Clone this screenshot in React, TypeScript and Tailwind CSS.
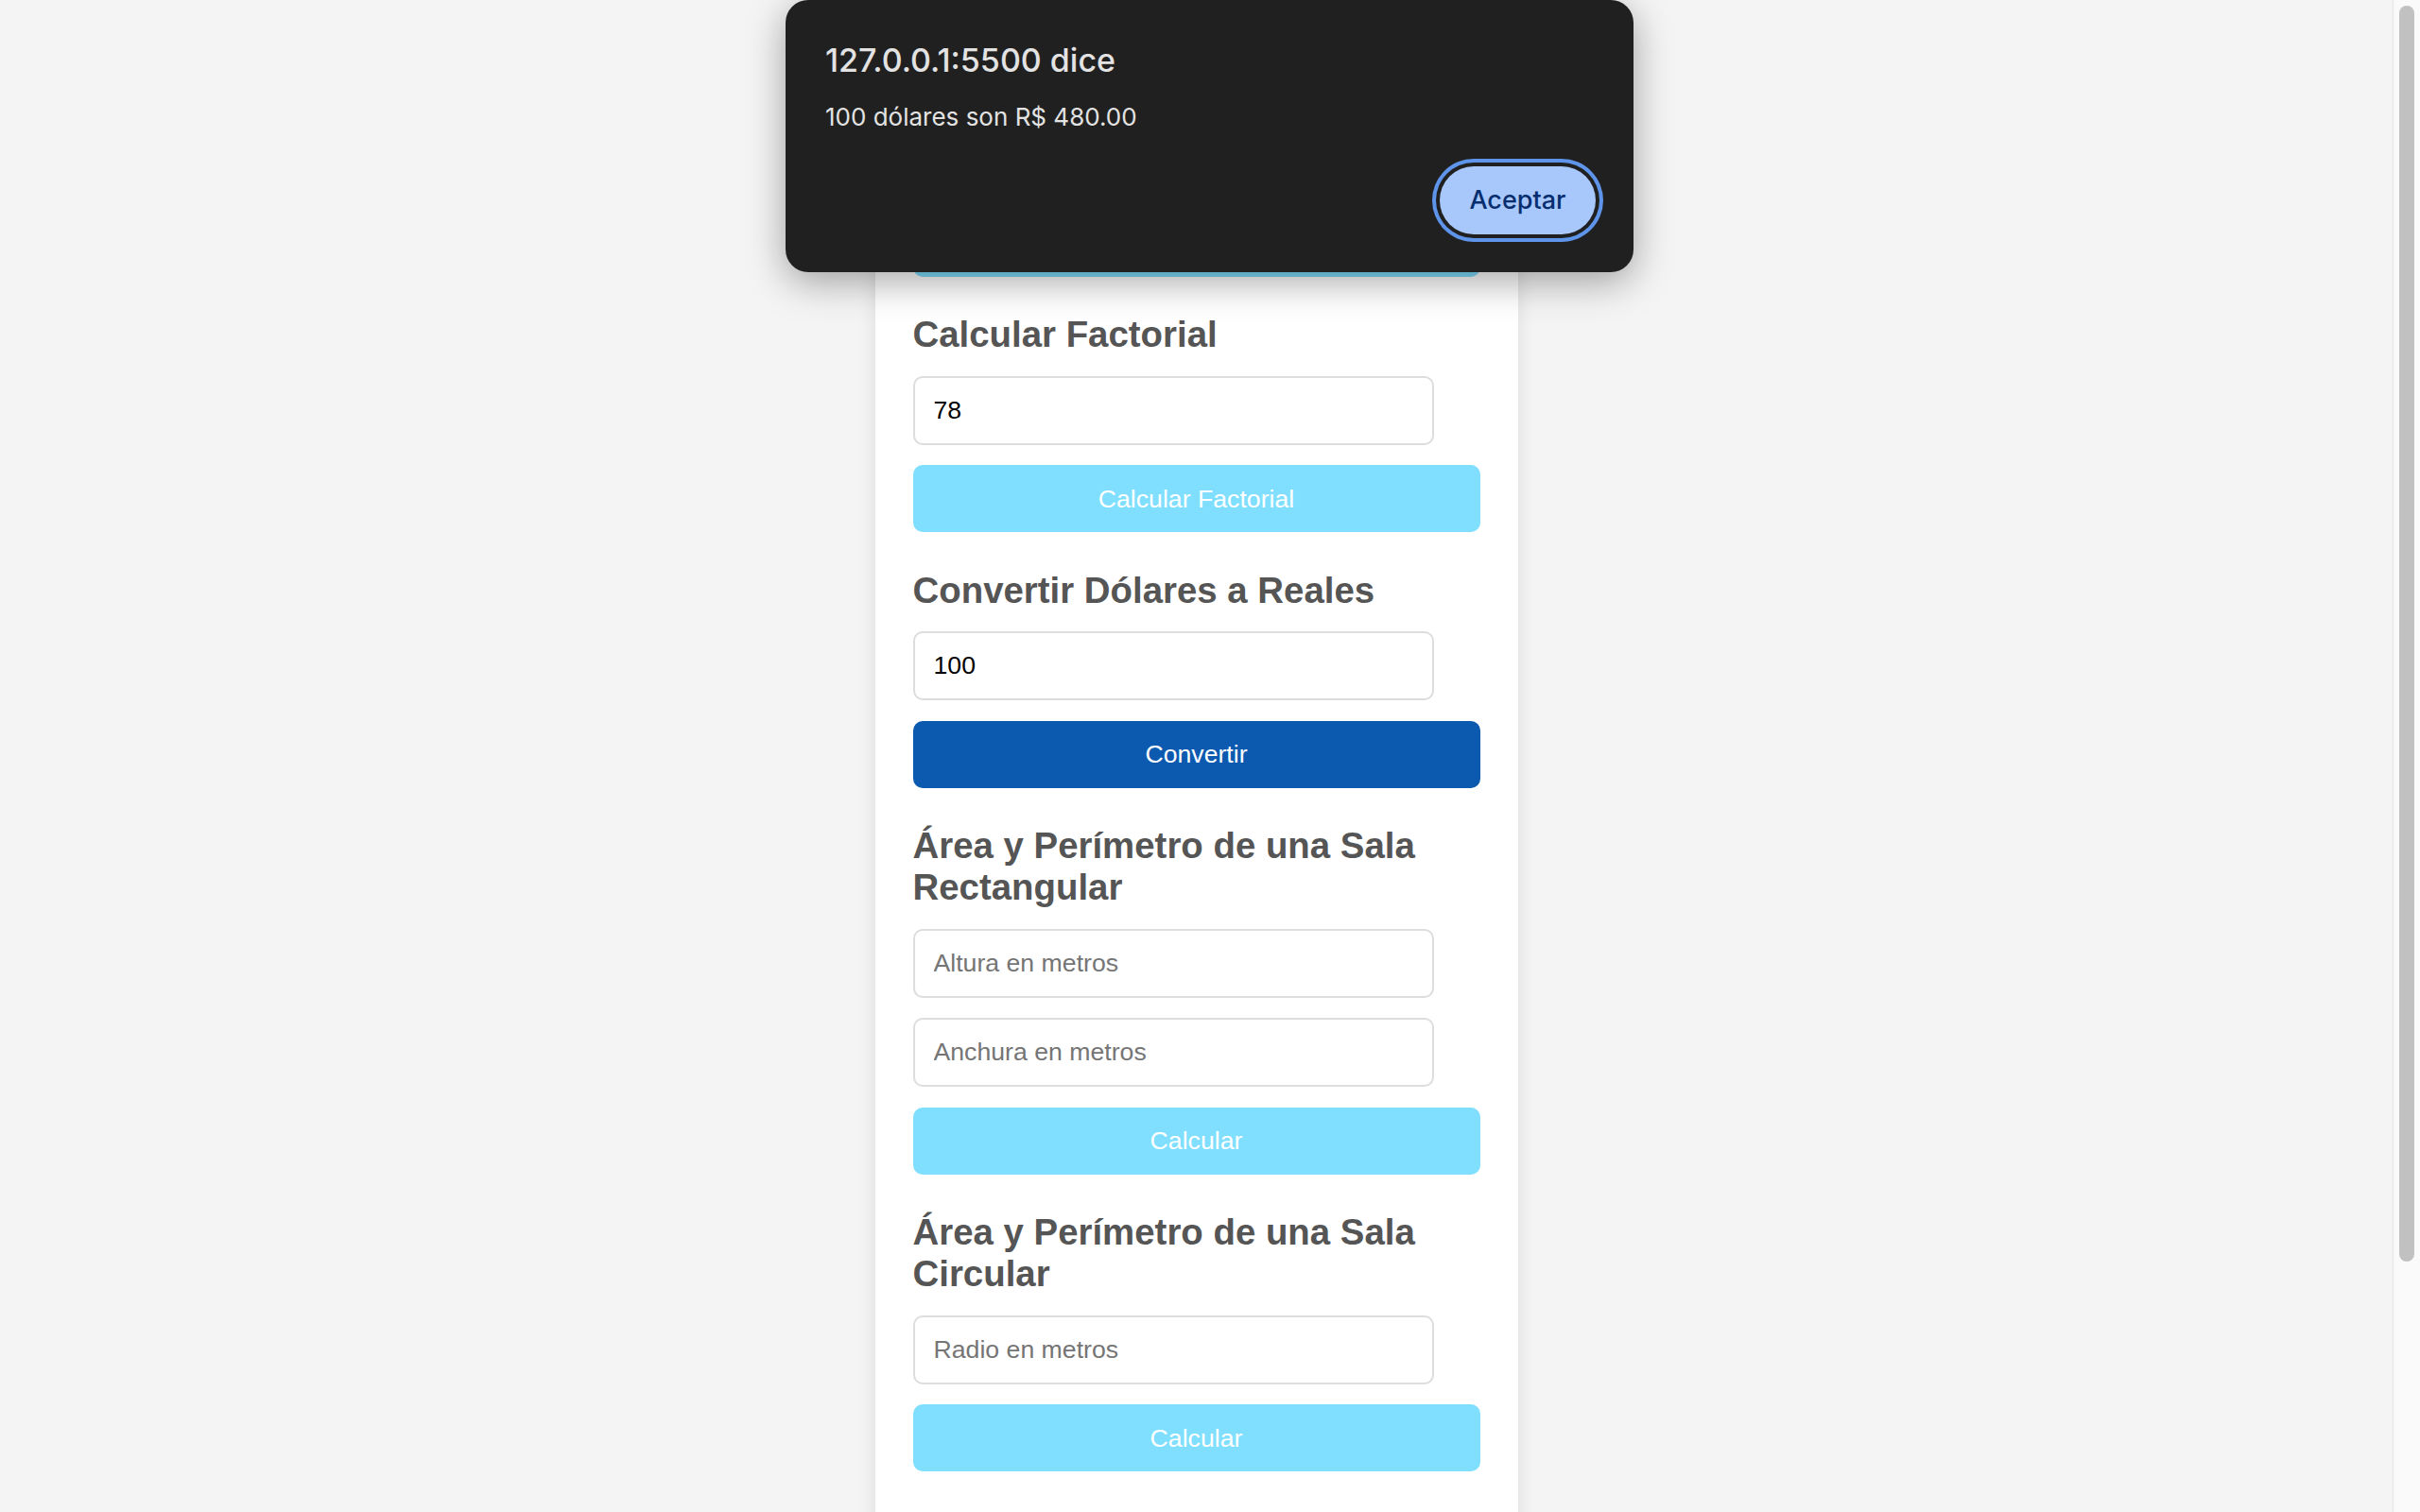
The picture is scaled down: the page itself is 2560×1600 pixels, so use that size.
import React from 'react';

type Section = {
  title: string;
  fields: { placeholder?: string; value?: string }[];
  button: string;
  active?: boolean;
};

// first block sits under the alert, only the bottom edge of its button shows
const sections: Section[] = [
  { title: '', fields: [{}], button: '' },
  { title: 'Calcular Factorial', fields: [{ value: '78' }], button: 'Calcular Factorial' },
  { title: 'Convertir Dólares a Reales', fields: [{ value: '100' }], button: 'Convertir', active: true },
  {
    title: 'Área y Perímetro de una Sala Rectangular',
    fields: [{ placeholder: 'Altura en metros' }, { placeholder: 'Anchura en metros' }],
    button: 'Calcular',
  },
  {
    title: 'Área y Perímetro de una Sala Circular',
    fields: [{ placeholder: 'Radio en metros' }],
    button: 'Calcular',
  },
];

function AlertDialog() {
  return (
    <div className="absolute left-[831px] top-0 z-20 flex h-[288px] w-[897px] flex-col rounded-[24px] bg-[#202020] pl-[42px] pr-[40px] pt-[44px] pb-[40px] shadow-[0_10px_40px_rgba(0,0,0,0.35)] font-['Inter',sans-serif]">
      <h3 className="text-[34px] leading-[40px] font-medium text-[#e3e3e3]">127.0.0.1:5500 dice</h3>
      <p className="mt-[24px] text-[26px] leading-[32px] text-[#e3e3e3]">100 dólares son R$ 480.00</p>
      <div className="mt-auto flex justify-end">
        <button className="h-[72px] w-[165px] rounded-full bg-[#a8c7fa] text-[27px] font-medium text-[#062e6f] ring-4 ring-[#5e95ea] ring-offset-4 ring-offset-[#202020]">
          Aceptar
        </button>
      </div>
    </div>
  );
}

function Scrollbar() {
  return (
    <div className="flex h-full w-[29px] shrink-0 justify-center border-l border-[#e6e6e6] bg-[#fafafa] pt-[6px]">
      <div className="h-[1329px] w-[16px] rounded-full bg-[#c1c1c1]" />
    </div>
  );
}

export default function App() {
  return (
    <div className="relative flex h-[1600px] w-full overflow-hidden bg-[#f4f4f4] font-['Liberation_Sans',Arial,sans-serif]">
      <main className="flex flex-1 justify-center overflow-hidden pt-[21.5px]">
        <div className="w-[680px] self-start rounded-[16px] bg-white px-[40px] pt-[40px] pb-[120px] shadow-[0_0_20px_rgba(0,0,0,0.1)]">
          {sections.map((s, i) => (
            <section key={i} className={i === 0 ? '' : 'mt-[39.5px]'}>
              <h2 className="mb-[21.5px] min-h-[44px] text-[38.4px] leading-[44px] font-bold text-[#555555]">{s.title}</h2>
              <div className="flex flex-col gap-[21.5px]">
                {s.fields.map((f, j) => (
                  <input
                    key={j}
                    type="text"
                    defaultValue={f.value}
                    placeholder={f.placeholder}
                    className="box-border h-[73px] w-[551px] rounded-[10px] border-2 border-[#dddddd] bg-white px-[20px] text-[26.67px] text-black outline-none placeholder:text-[#757575]"
                  />
                ))}
                <button
                  className={`h-[71px] w-full rounded-[10px] text-[26.67px] text-white ${
                    s.active ? 'bg-[#0c59b0]' : 'bg-[#80dfff]'
                  }`}
                >
                  {s.button}
                </button>
              </div>
            </section>
          ))}
        </div>
      </main>
      <Scrollbar />
      <AlertDialog />
    </div>
  );
}
